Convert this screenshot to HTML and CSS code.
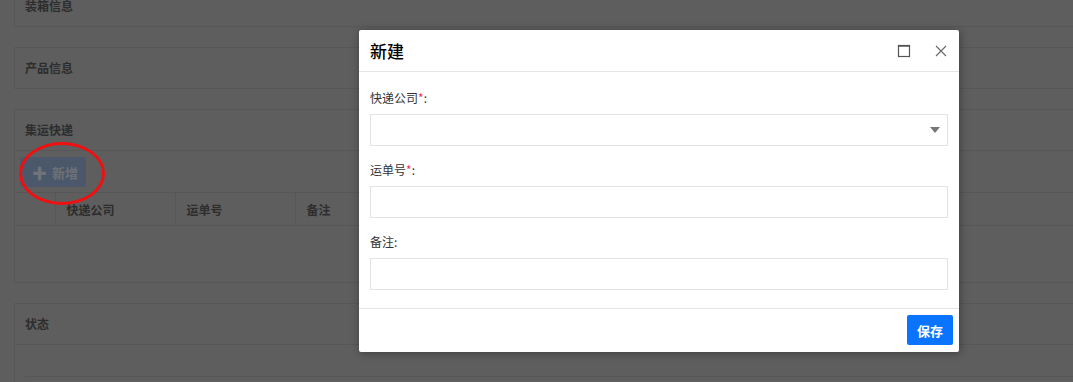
FILE: index.html
```html
<!DOCTYPE html>
<html lang="zh-CN">
<head>
    <meta charset="utf-8">
    <title>集运快递</title>
    <link rel="stylesheet" href="styles.css">
</head>
<body>
    <div class="page">
        <div class="panel">
            <div class="panel-heading">装箱信息</div>
        </div>

        <div class="panel">
            <div class="panel-heading">产品信息</div>
        </div>

        <div class="panel">
            <div class="panel-heading">集运快递</div>
            <div class="panel-body toolbar-body">
                <button class="btn-add" type="button"><span class="plus">&#10010;</span>新增</button>
                <table class="grid">
                    <thead>
                        <tr>
                            <th class="col-check"></th>
                            <th>快递公司</th>
                            <th>运单号</th>
                            <th>备注</th>
                            <th>操作</th>
                            <th></th>
                        </tr>
                    </thead>
                    <tbody>
                        <tr class="empty-row"><td colspan="6"></td></tr>
                    </tbody>
                </table>
            </div>
        </div>

        <div class="panel">
            <div class="panel-heading">状态</div>
            <div class="panel-body status-body">
                <div class="status-line"></div>
            </div>
        </div>
    </div>

    <!-- mark drawn over the add button -->
    <div class="highlight"></div>

    <div class="modal">
        <div class="modal-header">
            <span class="modal-title">新建</span>
            <div class="modal-tools">
                <svg class="tool" width="14" height="14" viewBox="0 0 14 14">
                    <rect x="1.5" y="1.5" width="11" height="11" fill="none" stroke="#555" stroke-width="1.2"/>
                    <line x1="1.5" y1="2" x2="12.5" y2="2" stroke="#555" stroke-width="1.5"/>
                </svg>
                <svg class="tool" width="14" height="14" viewBox="0 0 14 14">
                    <path d="M2 2 L12 12 M12 2 L2 12" stroke="#666" stroke-width="1.1" fill="none"/>
                </svg>
            </div>
        </div>
        <form class="modal-body">
            <div class="form-group">
                <label>快递公司<span class="req">*</span>:</label>
                <div class="select">
                    <span class="caret"></span>
                </div>
            </div>
            <div class="form-group">
                <label>运单号<span class="req">*</span>:</label>
                <input type="text" class="form-input">
            </div>
            <div class="form-group">
                <label>备注:</label>
                <input type="text" class="form-input">
            </div>
        </form>
        <div class="modal-footer">
            <button class="btn-save" type="button">保存</button>
        </div>
    </div>
</body>
</html>
```

FILE: styles.css
```css
html, body {
    margin: 0;
    padding: 0;
    height: 100%;
    overflow: hidden;
}

body {
    background-color: #5e5e5e;
    font-family: "Microsoft YaHei", "Noto Sans CJK SC", sans-serif;
    font-size: 12px;
    color: #2d2d2d;
}

/* dimmed page behind the dialog */
.page {
    padding-left: 14px;
    margin-top: -15px;
    margin-right: -20px;
}

.panel {
    border: 1px solid #575757;
    margin-bottom: 20px;
}

.panel-heading {
    height: 40px;
    line-height: 40px;
    padding-left: 10px;
    font-weight: bold;
    color: #2d2d2d;
}

.panel-body {
    border-top: 1px solid #575757;
}

.toolbar-body {
    padding-top: 6px;
}

.btn-add {
    display: flex;
    align-items: center;
    height: 30px;
    width: 66px;
    margin-left: 5px;
    padding: 0 0 0 12px;
    border: none;
    border-radius: 2px;
    background-color: #4b586b;
    color: #6e7278;
    font-family: inherit;
    font-size: 13px;
    font-weight: bold;
}

.plus {
    font-size: 15px;
    margin-right: 5px;
    color: #70747a;
}

.grid {
    width: 100%;
    margin-top: 5px;
    border-collapse: collapse;
    table-layout: fixed;
}

.grid th {
    height: 33px;
    width: 120px;
    padding: 0 0 0 11px;
    border-top: 1px solid #575757;
    border-bottom: 1px solid #575757;
    border-left: 1px solid #575757;
    text-align: left;
    font-weight: bold;
    color: #2d2d2d;
    box-sizing: border-box;
}

.grid th:first-child {
    border-left: none;
}

.grid th.col-check {
    width: 40px;
}

.grid th:last-child {
    width: auto;
}

.empty-row td {
    height: 56px;
    padding: 0;
}

.status-body {
    padding: 31px 0 0 10px;
    height: 40px;
}

.status-line {
    border-top: 1px solid #575757;
}

.highlight {
    position: absolute;
    left: 19px;
    top: 142px;
    width: 80px;
    height: 57px;
    border: 3px solid #f01010;
    border-radius: 50%;
}

/* dialog */
.modal {
    position: absolute;
    left: 359px;
    top: 30px;
    width: 600px;
    background-color: #fff;
    border-radius: 2px;
    box-shadow: 1px 1px 8px rgba(0, 0, 0, 0.35);
    color: #333;
}

.modal-header {
    height: 41px;
    display: flex;
    align-items: center;
    justify-content: space-between;
    padding: 0 11px;
    border-bottom: 1px solid #e5e5e5;
}

.modal-title {
    font-size: 17px;
    color: #000;
    font-weight: 500;
}

.modal-tools {
    display: flex;
    align-items: center;
    gap: 23px;
    padding-right: 0;
}

.tool {
    display: block;
}

.modal-body {
    padding: 16px 11px 4px;
}

.form-group {
    margin-bottom: 14px;
}

.form-group label {
    display: block;
    line-height: 20px;
    margin-bottom: 6px;
    color: #333;
}

.req {
    color: #f0306a;
}

.select,
.form-input {
    display: block;
    position: relative;
    width: 100%;
    height: 32px;
    border: 1px solid #e3e3e3;
    box-sizing: border-box;
    background-color: #fff;
    margin: 0;
    outline: none;
}

.caret {
    position: absolute;
    right: 7px;
    top: 12px;
    width: 0;
    height: 0;
    border-left: 5px solid transparent;
    border-right: 5px solid transparent;
    border-top: 6px solid #777;
}

.modal-footer {
    border-top: 1px solid #e5e5e5;
    padding: 6px 6px 7px;
    display: flex;
    justify-content: flex-end;
}

.btn-save {
    width: 46px;
    height: 30px;
    border: none;
    border-radius: 2px;
    background-color: #0a74ff;
    color: #fff;
    font-family: inherit;
    font-size: 13px;
    font-weight: bold;
    padding: 0;
}
```
